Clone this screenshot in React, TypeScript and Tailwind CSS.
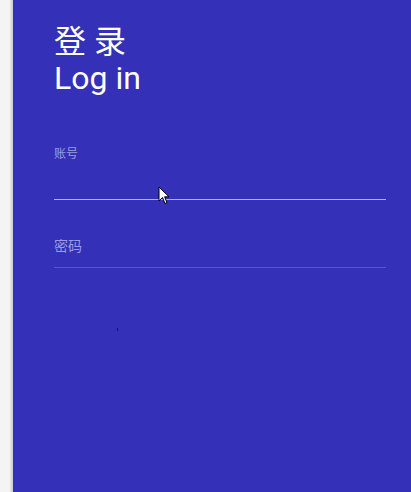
import React from 'react';

export default function App() {
    return (
        <main className="flex h-[492px] w-[411px] overflow-hidden bg-[#f4f4f2]" style={{ fontFamily: 'Roboto, "Noto Sans CJK SC", sans-serif' }}>
            <div className="w-[10px] shrink-0 bg-[#f4f4f2]" />
            <div className="w-[3px] shrink-0 bg-gradient-to-r from-[#e6e6ea] to-[#c9c9d6]" />
            <section className="relative flex-1 bg-[#3430b8] pl-[41px] pr-[25px] pt-[24px]">
                <h1 className="text-[32px] leading-[36px] text-white">登 录</h1>
                <h2 className="text-[32px] leading-[36px] text-white">Log in</h2>

                <div className="mt-[51px]">
                    <label className="block text-[12px] leading-[14px] text-[#9d9be3]">账号</label>
                    <div className="mt-[38px] h-px bg-[#b4b3f2]" />
                </div>

                <div className="mt-[38px]">
                    <label className="block text-[14px] leading-[16px] text-[#9d9be3]">密码</label>
                    <div className="mt-[13px] h-px bg-[#5552d6]" />
                </div>

                <svg className="absolute left-[145px] top-[186px]" width="12" height="19" viewBox="0 0 12 19">
                    <path d="M1 1 L1 15 L4.5 11.5 L7 17.5 L9 16.6 L6.6 10.8 L11 10.8 Z" fill="white" stroke="black" strokeWidth="1" strokeLinejoin="round" />
                </svg>
                <div className="absolute left-[104px] top-[328px] h-[3px] w-px bg-[#14126a]" />
            </section>
        </main>
    );
}
